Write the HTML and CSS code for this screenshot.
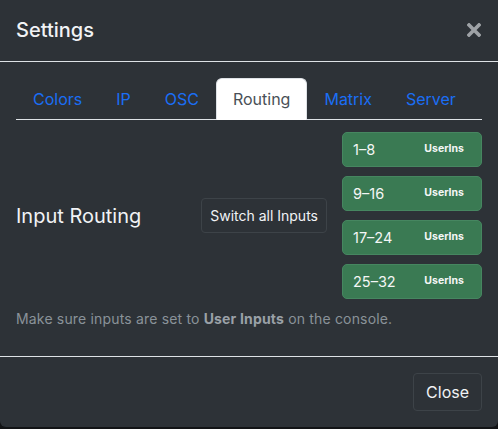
FILE: index.html
```html
<!DOCTYPE html>
<html>
<head>
<meta charset="utf-8">
<link rel="stylesheet" href="styles.css">
</head>
<body>
<div class="modal">
  <div class="modal-header">
    <h5 class="modal-title">Settings</h5>
    <button class="close" aria-label="Close">
      <svg width="14" height="14" viewBox="0 0 14 14"><path d="M2 2 L12 12 M12 2 L2 12" stroke="#9ea2a6" stroke-width="3.6" stroke-linecap="square"/></svg>
    </button>
  </div>
  <div class="modal-body">
    <ul class="nav-tabs">
      <li class="nav-link">Colors</li>
      <li class="nav-link">IP</li>
      <li class="nav-link">OSC</li>
      <li class="nav-link active">Routing</li>
      <li class="nav-link">Matrix</li>
      <li class="nav-link">Server</li>
    </ul>
    <div class="tab-pane">
      <div class="routing-row">
        <h5 class="routing-title">Input Routing</h5>
        <button class="btn btn-outline">Switch all Inputs</button>
        <div class="bank-list">
          <button class="btn-bank"><span class="bank-range">1–8</span><span class="bank-mode">UserIns</span></button>
          <button class="btn-bank"><span class="bank-range">9–16</span><span class="bank-mode">UserIns</span></button>
          <button class="btn-bank"><span class="bank-range">17–24</span><span class="bank-mode">UserIns</span></button>
          <button class="btn-bank"><span class="bank-range">25–32</span><span class="bank-mode">UserIns</span></button>
        </div>
      </div>
      <p class="hint">Make sure inputs are set to <strong>User Inputs</strong> on the console.</p>
    </div>
  </div>
  <div class="modal-footer">
    <button class="btn btn-outline btn-close">Close</button>
  </div>
</div>
</body>
</html>
```

FILE: styles.css
```css
* { box-sizing: border-box; }
html, body {
  margin: 0;
  padding: 0;
  background: #121416;
  font-family: Inter, "Noto Sans", sans-serif;
  color: #e9ecef;
}
.modal {
  width: 498px;
  height: 427px;
  background: #2d3237;
  border-radius: 0 0 6px 6px;
  display: flex;
  flex-direction: column;
}
.modal-header {
  display: flex;
  align-items: center;
  justify-content: space-between;
  padding: 15px 16px 16px 16px;
  border-bottom: 1px solid #dee2e6;
}
.modal-title {
  margin: 0;
  font-size: 20px;
  font-weight: 500;
  line-height: 30px;
  color: #f1f3f5;
}
.close {
  background: none;
  border: 0;
  padding: 0;
  margin-right: 1px;
  width: 14px;
  height: 14px;
  display: flex;
}
.modal-body {
  padding: 16px 16px 0 16px;
  flex: 1;
}
.nav-tabs {
  list-style: none;
  margin: 0;
  padding: 0;
  display: flex;
  border-bottom: 1px solid #dee2e6;
}
.nav-link {
  padding: 8px 16px;
  border: 1px solid transparent;
  border-top-left-radius: 6px;
  border-top-right-radius: 6px;
  margin-bottom: -1px;
  font-size: 16px;
  line-height: 24px;
  color: #1a6ef5;
}
.nav-link.active {
  background: #ffffff;
  border-color: #dee2e6 #dee2e6 #ffffff;
  color: #495057;
}
.tab-pane {
  padding-top: 12px;
}
.routing-row {
  display: flex;
  align-items: center;
}
.routing-title {
  flex: 1;
  margin: 0;
  font-size: 20px;
  font-weight: 400;
  line-height: 30px;
  color: #f1f3f5;
}
.btn {
  font-family: inherit;
  color: #f1f3f5;
  background: transparent;
  border: 1px solid #3d4348;
  border-radius: 4px;
  cursor: pointer;
}
.btn-outline {
  font-size: 14px;
  line-height: 21px;
  padding: 6px 8px;
}
.bank-list {
  width: 140px;
  margin-left: 15px;
  display: flex;
  flex-direction: column;
  gap: 9px;
}
.btn-bank {
  height: 35px;
  display: flex;
  align-items: center;
  justify-content: space-between;
  padding: 0 17px 0 10px;
  background: #3a7a53;
  border: 1px solid #468660;
  border-radius: 5px;
  color: #f4f6f5;
  font-family: inherit;
}
.bank-range {
  font-size: 14.5px;
  line-height: 21px;
}
.bank-mode {
  font-size: 10.5px;
  font-weight: 700;
  line-height: 16px;
  padding-bottom: 2px;
}
.hint {
  margin: 9px 0 0 0;
  font-size: 14px;
  line-height: 21px;
  letter-spacing: 0.17px;
  color: #8a9299;
}
.hint strong {
  color: #9aa1a7;
  font-weight: 700;
}
.modal-footer {
  border-top: 1px solid #dee2e6;
  padding: 12px;
  display: flex;
  justify-content: flex-end;
}
.btn-close {
  margin: 4px;
  font-size: 16px;
  line-height: 24px;
  padding: 6px 12px;
}
```
